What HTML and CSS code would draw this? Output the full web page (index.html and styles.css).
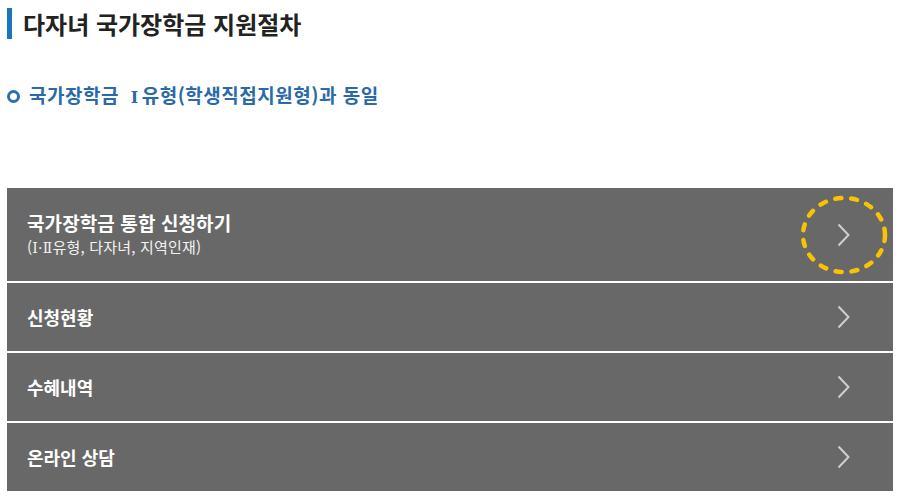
FILE: index.html
```html
<!DOCTYPE html>
<html lang="ko">
<head>
<meta charset="utf-8">
<link rel="stylesheet" href="styles.css">
</head>
<body>
<h1 class="page-title">다자녀 국가장학금 지원절차</h1>
<p class="subtitle"><span class="ring"></span><span>국가장학금 <span class="roman">Ⅰ</span>유형(학생직접지원형)과 동일</span></p>
<ul class="menu">
  <li class="item item-tall">
    <div class="label">
      <div class="main">국가장학금 통합 신청하기</div>
      <div class="sub">(<span class="roman-sm">Ⅰ·Ⅱ</span>유형, 다자녀, 지역인재)</div>
    </div>
    <svg class="chev" width="13" height="24" viewBox="0 0 13 24"><polyline points="1.5,1.5 11.5,12 1.5,22.5" fill="none" stroke="#cfcfcf" stroke-width="2"/></svg>
    <svg class="mark" width="90" height="82" viewBox="0 0 90 82"><ellipse cx="45" cy="41" rx="41" ry="37" fill="none" stroke="#f8c300" stroke-width="4.5" stroke-linecap="round" stroke-dasharray="6 9.9"/></svg>
  </li>
  <li class="item">
    <div class="label"><div class="main sm">신청현황</div></div>
    <svg class="chev" width="13" height="24" viewBox="0 0 13 24"><polyline points="1.5,1.5 11.5,12 1.5,22.5" fill="none" stroke="#cfcfcf" stroke-width="2"/></svg>
  </li>
  <li class="item">
    <div class="label"><div class="main sm">수혜내역</div></div>
    <svg class="chev" width="13" height="24" viewBox="0 0 13 24"><polyline points="1.5,1.5 11.5,12 1.5,22.5" fill="none" stroke="#cfcfcf" stroke-width="2"/></svg>
  </li>
  <li class="item">
    <div class="label"><div class="main sm">온라인 상담</div></div>
    <svg class="chev" width="13" height="24" viewBox="0 0 13 24"><polyline points="1.5,1.5 11.5,12 1.5,22.5" fill="none" stroke="#cfcfcf" stroke-width="2"/></svg>
  </li>
</ul>
</body>
</html>
```
FILE: styles.css
```css
html, body {
  margin: 0;
  padding: 0;
  background: #ffffff;
}
body {
  font-family: "Noto Sans CJK KR", "Noto Sans", sans-serif;
  color: #222222;
}
.page-title {
  margin: 8px 0 0 7px;
  padding-left: 11px;
  border-left: 5px solid #1a75bc;
  height: 31px;
  line-height: 31px;
  font-size: 24px;
  font-weight: 700;
  color: #222222;
}
.subtitle {
  margin: 44px 0 0 7px;
  display: flex;
  align-items: center;
  gap: 9px;
  height: 26px;
  line-height: 26px;
  font-size: 19px;
  font-weight: 700;
  color: #2a6aa8;
  letter-spacing: 0.5px;
}
.ring {
  width: 7px;
  height: 7px;
  border: 3px solid #2f6ea8;
  border-radius: 50%;
}
.roman {
  font-family: "DejaVu Serif", "Liberation Serif", serif;
  font-weight: 700;
  font-size: 16px;
  margin-left: 6px;
  margin-right: 3px;
}
.roman-sm {
  font-family: "DejaVu Serif", "Liberation Serif", serif;
  font-size: 14px;
}
.menu {
  list-style: none;
  margin: 79px 0 0 7px;
  padding: 0;
  width: 886px;
  display: flex;
  flex-direction: column;
  gap: 2px;
}
.item {
  position: relative;
  height: 68px;
  background: #686868;
  display: flex;
  align-items: center;
  justify-content: space-between;
  padding: 0 43px 0 20px;
  color: #ffffff;
}
.item-tall {
  height: 93px;
}
.main {
  font-size: 19px;
  font-weight: 700;
  line-height: 26px;
  letter-spacing: 0.1px;
}
.main.sm {
  font-size: 18px;
  letter-spacing: 0;
}
.sub {
  font-size: 15px;
  line-height: 22px;
  color: #f2f2f2;
  letter-spacing: 0.2px;
}
.chev {
  display: block;
}
.mark {
  position: absolute;
  right: 4px;
  top: 6px;
}
```
